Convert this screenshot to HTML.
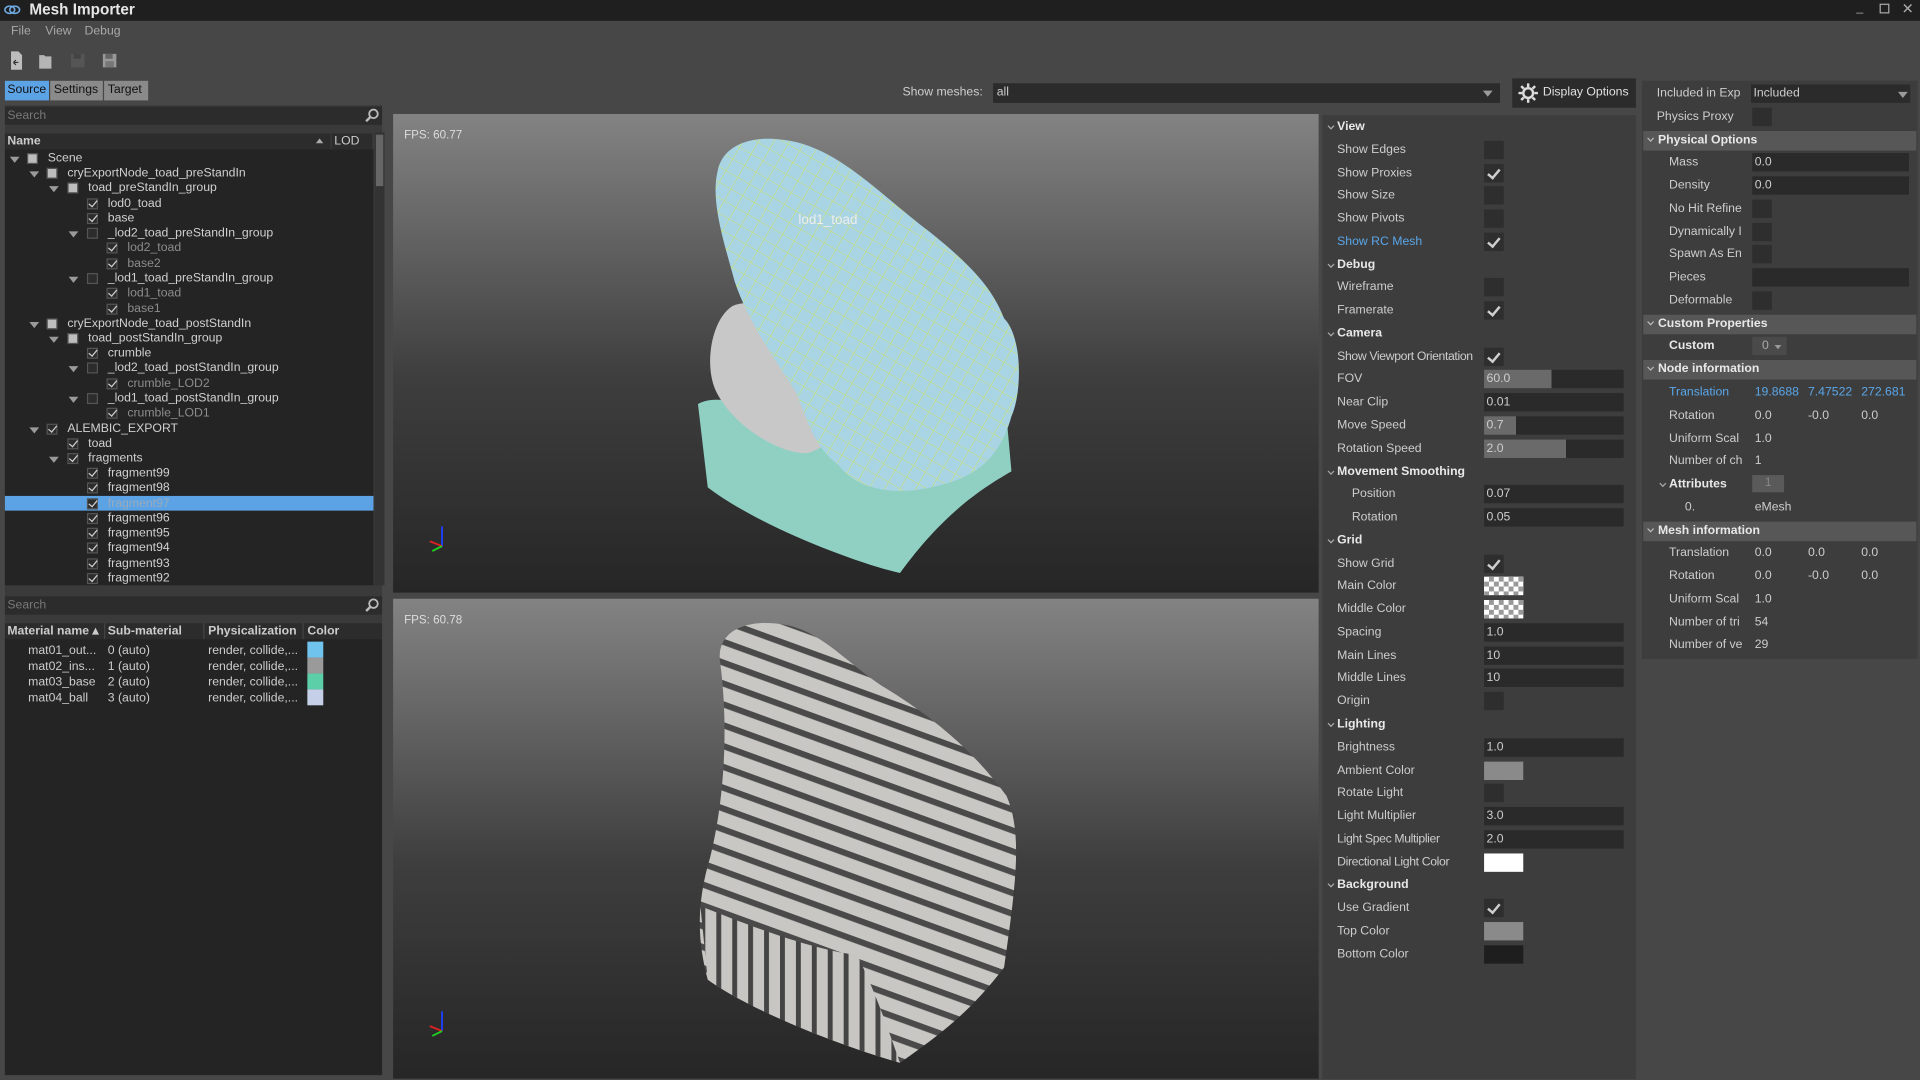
<!DOCTYPE html>
<html><head><meta charset="utf-8">
<style>
*{margin:0;padding:0;box-sizing:border-box}
html,body{width:1920px;height:1080px;overflow:hidden;background:#474747}
#s{position:absolute;left:0;top:0;width:1568px;height:882px;transform:scale(1.22449);transform-origin:0 0;background:#474747;font-family:"Liberation Sans",sans-serif;font-size:10px;color:#cdcdcd}
.a{position:absolute;white-space:nowrap}
.t{position:absolute;white-space:nowrap;line-height:12px}
.cb{position:absolute;width:16px;height:15px;background:#2e2e2e}
.ck::after{content:"";position:absolute;left:5px;top:2px;width:4px;height:8px;border:solid #cfcfcf;border-width:0 2px 2px 0;transform:rotate(40deg)}
.fd{position:absolute;height:15px;background:#2a2a2a;padding-left:2px;line-height:15px}
.hd{position:absolute;font-weight:bold;color:#e8e8e8}
.hd::before{content:"";position:absolute;left:-7px;top:3px;width:3px;height:3px;border:solid #aaa;border-width:0 1px 1px 0;transform:rotate(45deg)}
.rh{position:absolute;left:1342px;width:223px;height:16px;background:#575757;font-weight:bold;color:#e8e8e8;padding-left:12px;line-height:16px}
.rh::before{content:"";position:absolute;left:4px;top:4px;width:3px;height:3px;border:solid #bbb;border-width:0 1px 1px 0;transform:rotate(45deg)}
.tc{position:absolute;width:9px;height:9px;background:#2c2c2c;border:1px solid #555}
.tb{position:absolute;width:8px;height:8px;background:#bdbdbd}
.tk{position:absolute;width:9px;height:9px}
.tk::after{content:"";position:absolute;left:3px;top:0;width:3px;height:6px;border:solid #d0d0d0;border-width:0 1.5px 1.5px 0;transform:rotate(40deg)}
.ar{position:absolute;width:0;height:0;border-left:4px solid transparent;border-right:4px solid transparent;border-top:5px solid #9a9a9a}
</style></head><body><div id="s">
<div class="a" style="left:0;top:0;width:1568px;height:17px;background:#1f1f1f"></div>
<svg class="a" style="left:3px;top:4px" width="14" height="8"><ellipse cx="5" cy="4" rx="4" ry="3" fill="none" stroke="#6fa8e0" stroke-width="1.3"/><ellipse cx="9" cy="4" rx="4" ry="3" fill="none" stroke="#6fa8e0" stroke-width="1.3"/></svg>
<div class="a" style="left:24px;top:1px;font-size:12.5px;font-weight:bold;color:#e6e6e6">Mesh Importer</div>
<div class="a" style="left:1516px;top:1px;color:#aaa">_</div>
<div class="a" style="left:1535px;top:3px;width:8px;height:8px;border:1px solid #aaa"></div>
<div class="a" style="left:1553px;top:0px;color:#aaa;font-size:12px">✕</div>
<div class="a" style="left:9px;top:20px;color:#a8a8a8">File</div>
<div class="a" style="left:37px;top:20px;color:#a8a8a8">View</div>
<div class="a" style="left:69px;top:20px;color:#a8a8a8">Debug</div>
<svg class="a" style="left:7px;top:41px" width="100" height="17">
<path d="M2 1h6l3 3v12H2z" fill="#bdbdbd"/><path d="M4 10h4M4 10l2-2M4 10l2 2" stroke="#333" stroke-width="1"/>
<path d="M25 4h4l1 1h5v10H25z" fill="#b5b5b5"/>
<rect x="51" y="3" width="11" height="11" fill="#555"/><rect x="53" y="3" width="6" height="4" fill="#444"/>
<rect x="77" y="3" width="11" height="11" fill="#999"/><rect x="79" y="3" width="6" height="4" fill="#666"/><rect x="79" y="9" width="7" height="5" fill="#777"/>
</svg>
<div class="a" style="left:4px;top:66px;width:36px;height:16px;background:#5ca3e6;color:#111;line-height:16px;padding-left:2px">Source</div>
<div class="a" style="left:41px;top:66px;width:43px;height:16px;background:#8a8a8a;color:#111;line-height:16px;padding-left:3px">Settings</div>
<div class="a" style="left:85px;top:66px;width:36px;height:16px;background:#8a8a8a;color:#111;line-height:16px;padding-left:3px">Target</div>
<div class="a" style="left:4px;top:86px;width:308px;height:792px;background:#3a3a3a"></div>
<div class="a" style="left:4px;top:87px;width:308px;height:15px;background:#2c2c2c;color:#777;padding-left:2px;line-height:15px">Search</div>
<svg class="a" style="left:298px;top:88px" width="12" height="12"><circle cx="7" cy="5" r="3.5" fill="none" stroke="#bbb" stroke-width="1.5"/><path d="M4.5 7.5L1 11" stroke="#bbb" stroke-width="2"/></svg>
<div class="a" style="left:306px;top:108px;width:8px;height:370px;background:#333"></div>
<div class="a" style="left:307px;top:110px;width:6px;height:42px;background:#666"></div>
<div class="a" style="left:4px;top:109px;width:266px;height:13px;background:#2c2c2c;font-weight:bold;color:#ccc;padding-left:2px;line-height:13px">Name</div>
<div class="a" style="left:258px;top:113px;border-left:3px solid transparent;border-right:3px solid transparent;border-bottom:4px solid #aaa"></div>
<div class="a" style="left:271px;top:109px;width:33px;height:13px;background:#2c2c2c;color:#ccc;padding-left:2px;line-height:13px">LOD</div>
<div class="a" style="left:4px;top:122px;width:301px;height:356px;background:#242424"></div>
<div class="a" style="left:4px;top:405px;width:301px;height:12px;background:#5ca3e6"></div>
<div class="a" style="left:4px;top:487px;width:308px;height:15px;background:#2c2c2c;color:#777;padding-left:2px;line-height:15px">Search</div>
<svg class="a" style="left:298px;top:488px" width="12" height="12"><circle cx="7" cy="5" r="3.5" fill="none" stroke="#bbb" stroke-width="1.5"/><path d="M4.5 7.5L1 11" stroke="#bbb" stroke-width="2"/></svg>
<div class="a" style="left:4px;top:509px;width:308px;height:13px;background:#2c2c2c"></div>
<div class="a" style="left:6px;top:510px;font-weight:bold;color:#ccc">Material name ▴</div>
<div class="a" style="left:85px;top:509px;width:1px;height:13px;background:#444"></div>
<div class="a" style="left:88px;top:510px;font-weight:bold;color:#ccc">Sub-material</div>
<div class="a" style="left:166px;top:509px;width:1px;height:13px;background:#444"></div>
<div class="a" style="left:170px;top:510px;font-weight:bold;color:#ccc">Physicalization</div>
<div class="a" style="left:247px;top:509px;width:1px;height:13px;background:#444"></div>
<div class="a" style="left:251px;top:510px;font-weight:bold;color:#ccc">Color</div>
<div class="a" style="left:4px;top:522px;width:308px;height:356px;background:#242424"></div>
<div class="a" style="left:23px;top:525px;line-height:13px">mat01_out...<br>mat02_ins...<br>mat03_base<br>mat04_ball</div>
<div class="a" style="left:88px;top:525px;line-height:13px">0 (auto)<br>1 (auto)<br>2 (auto)<br>3 (auto)</div>
<div class="a" style="left:170px;top:525px;line-height:13px">render, collide,...<br>render, collide,...<br>render, collide,...<br>render, collide,...</div>
<div class="a" style="left:251px;top:524px;width:13px;height:13px;background:#6fc3ec"></div>
<div class="a" style="left:251px;top:537px;width:13px;height:13px;background:#9a9a9a"></div>
<div class="a" style="left:251px;top:550px;width:13px;height:13px;background:#5ccfa8"></div>
<div class="a" style="left:251px;top:563px;width:13px;height:13px;background:#c5d0e8"></div>
<div class="a" style="left:737px;top:70px;color:#cfcfcf">Show meshes:</div>
<div class="a" style="left:811px;top:68px;width:414px;height:16px;background:#2b2b2b;padding-left:3px;line-height:16px">all</div>
<div class="ar" style="left:1211px;top:74px"></div>
<div class="a" style="left:1235px;top:64px;width:101px;height:24px;background:#2b2b2b;line-height:24px;padding-left:25px;color:#e0e0e0">Display Options</div>
<svg class="a" style="left:1240px;top:68px" width="16" height="16"><circle cx="8" cy="8" r="4" fill="none" stroke="#ddd" stroke-width="2"/><g stroke="#ddd" stroke-width="2"><path d="M8 0v3M8 13v3M0 8h3M13 8h3M2.3 2.3l2.1 2.1M11.6 11.6l2.1 2.1M2.3 13.7l2.1-2.1M11.6 4.4l2.1-2.1"/></g></svg>
<svg class="a" style="left:321px;top:93px" width="756" height="788">
<defs>
<linearGradient id="g" x1="0" y1="0" x2="0" y2="1"><stop offset="0" stop-color="#838383"/><stop offset=".55" stop-color="#3e3e3e"/><stop offset="1" stop-color="#262626"/></linearGradient>
<pattern id="st" width="16" height="16" patternUnits="userSpaceOnUse" patternTransform="rotate(20)"><rect width="16" height="16" fill="#c9c7c3"/><rect width="16" height="5" fill="#4a4a4a"/></pattern>
<pattern id="st2" width="13" height="13" patternUnits="userSpaceOnUse"><rect width="13" height="13" fill="#c8c6c2"/><rect width="4" height="13" fill="#444"/></pattern>
<pattern id="wf" width="11" height="11" patternUnits="userSpaceOnUse" patternTransform="rotate(30)"><path d="M0 0h11M0 0v11" stroke="#f3f000" stroke-width=".7" fill="none"/></pattern>
</defs>
<rect x="0" y="0" width="756" height="391" fill="url(#g)"/>
<rect x="0" y="396" width="756" height="392" fill="url(#g)"/>
<g transform="translate(-321,-93)">
<path d="M570 330C590 318 640 340 700 350C760 355 800 330 822 340L826 385C800 400 770 420 735 468C700 460 620 430 578 398Z" fill="#8fd0c2"/>
<path d="M598 250C620 240 660 262 685 300C700 330 690 360 660 370C640 372 600 350 585 320C575 300 580 262 598 250Z" fill="#c8c8c8"/>
<path d="M586 140C590 118 615 108 650 116C690 126 720 160 760 190C800 222 812 240 820 260C835 275 835 320 826 340C815 380 790 392 760 398C730 405 700 400 685 380C665 365 660 345 650 320C630 290 610 260 600 230C592 200 580 165 586 140Z" fill="#a8d4e4"/>
<path d="M586 140C590 118 615 108 650 116C690 126 720 160 760 190C800 222 812 240 820 260C835 275 835 320 826 340C815 380 790 392 760 398C730 405 700 400 685 380C665 365 660 345 650 320C630 290 610 260 600 230C592 200 580 165 586 140Z" fill="url(#wf)" opacity=".65"/>
<path d="M588 540C585 515 610 505 640 510C670 515 690 540 720 560C770 590 800 620 822 650C835 680 830 720 820 790C790 830 760 850 735 868C700 858 620 830 578 800C570 770 568 740 580 700C590 660 596 600 588 540Z" fill="url(#st)"/>
<path d="M572 740C610 755 660 775 700 780C715 810 725 840 735 868C700 858 620 830 578 800Z" fill="url(#st2)"/>
</g>
<text x="9" y="20" fill="#ddd" font-family="Liberation Sans" font-size="9.5">FPS: 60.77</text>
<text x="9" y="416" fill="#ddd" font-family="Liberation Sans" font-size="9.5">FPS: 60.78</text>
<text x="331" y="90" fill="#eee" font-family="Liberation Sans" font-size="11">lod1_toad</text>
<g stroke-width="1.5"><path d="M40 353V337" stroke="#2040ff"/><path d="M40 353l-10-4" stroke="#e02020"/><path d="M40 353l-8 4" stroke="#20d020"/>
<path d="M40 749V733" stroke="#2040ff"/><path d="M40 749l-10-4" stroke="#e02020"/><path d="M40 749l-8 4" stroke="#20d020"/></g>
</svg>
<div class="a" style="left:1080px;top:94px;width:256px;height:787px;background:#3d3d3d"></div>
<div class="a" style="left:1341px;top:66px;width:225px;height:472px;background:#3d3d3d"></div>
<script>
var S=document.getElementById('s');
function add(h){S.insertAdjacentHTML('beforeend',h);}
var tr=[[130,12,27,'b','Scene'],[142,28,43,'b','cryExportNode_toad_preStandIn'],[154,44,60,'b','toad_preStandIn_group'],[167,0,76,'k','lod0_toad'],[179,0,76,'k','base'],[191,60,76,'e','_lod2_toad_preStandIn_group'],[203,0,92,'k','lod2_toad',1],[216,0,92,'k','base2',1],[228,60,76,'e','_lod1_toad_preStandIn_group'],[240,0,92,'k','lod1_toad',1],[253,0,92,'k','base1',1],[265,28,43,'b','cryExportNode_toad_postStandIn'],[277,44,60,'b','toad_postStandIn_group'],[289,0,76,'k','crumble'],[301,60,76,'e','_lod2_toad_postStandIn_group'],[314,0,92,'k','crumble_LOD2',1],[326,60,76,'e','_lod1_toad_postStandIn_group'],[338,0,92,'k','crumble_LOD1',1],[351,28,43,'k','ALEMBIC_EXPORT'],[363,0,60,'k','toad'],[375,44,60,'k','fragments']];
for(var i=99;i>=92;i--)tr.push([387+(99-i)*12.27,0,76,'k','fragment'+i]);
tr.forEach(function(r){var y=r[0];
 if(r[1])add('<div class="ar" style="left:'+(r[1]-4)+'px;top:'+(y-2)+'px"></div>');
 if(r[3]=='b')add('<div class="tc" style="left:'+(r[2]-5)+'px;top:'+(y-5)+'px"></div><div class="tb" style="left:'+(r[2]-4)+'px;top:'+(y-4)+'px;width:7px;height:7px"></div>');
 else if(r[3]=='e')add('<div class="tc" style="left:'+(r[2]-5)+'px;top:'+(y-5)+'px"></div>');
 else add('<div class="tc" style="left:'+(r[2]-5)+'px;top:'+(y-5)+'px"></div><div class="tk" style="left:'+(r[2]-5)+'px;top:'+(y-5)+'px"></div>');
 var c=r[5]?'#8c8c8c':(r[4]=='fragment97'?'#9ab':'#d0d0d0');
 add('<div class="t" style="left:'+(r[2]+12)+'px;top:'+(y-6)+'px;color:'+c+'">'+r[4]+'</div>');});
var P=[['h','View'],['c','Show Edges',0],['c','Show Proxies',1],['c','Show Size',0],['c','Show Pivots',0],['c','Show RC Mesh',1,'#5aa6e8'],['h','Debug'],['c','Wireframe',0],['c','Framerate',1],['h','Camera'],['c','Show Viewport Orientation',1],['s','FOV','60.0',55],['f','Near Clip','0.01'],['s','Move Speed','0.7',26],['s','Rotation Speed','2.0',67],['h','Movement Smoothing'],['f','Position','0.07',1],['f','Rotation','0.05',1],['h','Grid'],['c','Show Grid',1],['w','Main Color','chk'],['w','Middle Color','chk'],['f','Spacing','1.0'],['f','Main Lines','10'],['f','Middle Lines','10'],['c','Origin',0],['h','Lighting'],['f','Brightness','1.0'],['w','Ambient Color','#8a8a8a'],['c','Rotate Light',0],['f','Light Multiplier','3.0'],['f','Light Spec Multiplier','2.0'],['w','Directional Light Color','#fff'],['h','Background'],['c','Use Gradient',1],['w','Top Color','#8a8a8a'],['w','Bottom Color','#1e1e1e']];
P.forEach(function(p,i){var y=104+i*18.77;var ty=y-6;
 if(p[0]=='h'){add('<div class="hd" style="left:1092px;top:'+ty+'px">'+p[1]+'</div>');return;}
 var lx=p[3]===1&&p[0]=='f'?1104:1092;
 add('<div class="t" style="left:'+lx+'px;top:'+ty+'px;color:'+(p[3]&&p[0]=='c'?p[3]:'#cdcdcd')+(p[1].length>20?';letter-spacing:-0.3px':'')+'">'+p[1]+'</div>');
 var cy=y-8;
 if(p[0]=='c')add('<div class="cb'+(p[2]?' ck':'')+'" style="left:1212px;top:'+cy+'px"></div>');
 if(p[0]=='f')add('<div class="fd" style="left:1212px;top:'+cy+'px;width:114px">'+p[2]+'</div>');
 if(p[0]=='s')add('<div class="fd" style="left:1212px;top:'+cy+'px;width:114px;background:linear-gradient(90deg,#6a6a6a '+p[3]+'px,#2a2a2a '+p[3]+'px)">'+p[2]+'</div>');
 if(p[0]=='w'){var bg=p[2]=='chk'?'background:#fff;background-image:repeating-conic-gradient(#999 0 25%,#fff 0 50%);background-size:8px 8px':'background:'+p[2];
  add('<div class="a" style="left:1212px;top:'+cy+'px;width:32px;height:15px;'+bg+'"></div>');}
});
var R=[['l','Included in Exp','combo'],['l','Physics Proxy','cb'],['h','Physical Options'],['l','Mass','f:0.0',1],['l','Density','f:0.0',1],['l','No Hit Refine','cb',1],['l','Dynamically I','cb',1],['l','Spawn As En','cb',1],['l','Pieces','f:',1],['l','Deformable','cb',1],['h','Custom Properties'],['l','Custom','dd',1],['h','Node information'],['l','Translation','v:19.8688|7.47522|272.681',1],['l','Rotation','v:0.0|-0.0|0.0',1],['l','Uniform Scal','v:1.0',1],['l','Number of ch','v:1',1],['a','Attributes'],['l','0.','v:eMesh',2],['h','Mesh information'],['l','Translation','v:0.0|0.0|0.0',1],['l','Rotation','v:0.0|-0.0|0.0',1],['l','Uniform Scal','v:1.0',1],['l','Number of tri','v:54',1],['l','Number of ve','v:29',1]];
R.forEach(function(r,i){var y=77+i*18.77,ty=y-6,cy=y-8;
 if(r[0]=='h'){add('<div class="rh" style="top:'+cy+'px">'+r[1]+'</div>');return;}
 if(r[0]=='a'){add('<div class="hd" style="left:1363px;top:'+ty+'px">'+r[1]+'</div><div class="a" style="left:1431px;top:'+cy+'px;width:26px;height:14px;background:#5a5a5a;color:#888;text-align:center;line-height:14px">1</div>');return;}
 var lx=r[3]==2?1376:(r[3]?1363:1353);
 var blue=(r[1]=='Translation'&&i==13);
 add('<div class="t" style="left:'+lx+'px;top:'+ty+'px;color:'+(blue?'#5aa6e8':'#cdcdcd')+';'+(r[1]=='Custom'?'font-weight:bold;color:#e8e8e8':'')+'">'+r[1]+'</div>');
 var c=r[2];
 if(c=='combo'){add('<div class="fd" style="left:1430px;top:'+cy+'px;width:130px;background:#2b2b2b">Included</div><div class="ar" style="left:1550px;top:'+(y-2)+'px"></div>');}
 else if(c=='cb')add('<div class="cb" style="left:1431px;top:'+cy+'px"></div>');
 else if(c=='dd')add('<div class="a" style="left:1431px;top:'+cy+'px;width:28px;height:15px;background:#4a4a4a;color:#aaa;line-height:15px;padding-left:8px">0</div><div class="ar" style="left:1448px;top:'+(y-2)+'px;transform:scale(.7)"></div>');
 else if(c.indexOf('f:')==0)add('<div class="fd" style="left:1431px;top:'+cy+'px;width:128px">'+c.slice(2)+'</div>');
 else {var v=c.slice(2).split('|');v.forEach(function(s,j){add('<div class="t" style="left:'+(1433+j*43.5)+'px;top:'+ty+'px;color:'+(blue?'#5aa6e8':'#cdcdcd')+'">'+s+'</div>');});}
});
</script>
</div></body></html>
